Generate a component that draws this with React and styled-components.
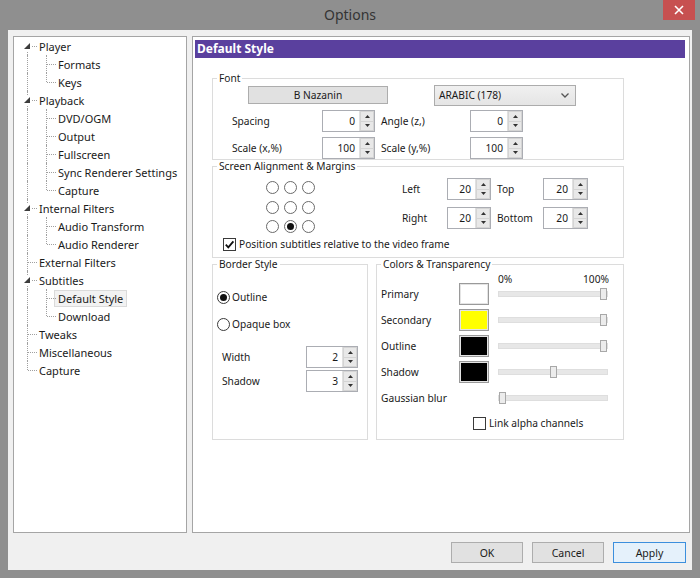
import React from 'react';
import styled, { createGlobalStyle } from 'styled-components';

const FONT = `"Segoe UI", "Noto Sans", "Open Sans", sans-serif`;

const Global = createGlobalStyle`
  html, body { margin: 0; padding: 0; background: #8f8f8f; }
  body { font-family: ${FONT}; font-size: 11px; color: #1a1a1a; }
  * { box-sizing: border-box; }
`;

const Window = styled.div`
  width: 700px;
  height: 578px;
  background: #8f8f8f;
  display: flex;
  flex-direction: column;
  padding-bottom: 8px;
`;

const TitleBar = styled.div`
  height: 30px;
  flex: none;
  display: grid;
  grid-template-columns: 1fr auto 1fr;
  align-items: start;
`;

const Title = styled.div`
  grid-column: 2;
  padding-top: 5px;
  line-height: 20px;
  font-size: 14px;
  color: #343434;
`;

const CloseBtn = styled.div`
  grid-column: 3;
  justify-self: end;
  margin-right: 5px;
  width: 32px;
  height: 20px;
  background: #c75050;
  display: flex;
  align-items: center;
  justify-content: center;
`;

const Client = styled.div`
  flex: 1;
  margin: 0 8px;
  background: #f0f0f0;
  padding: 6px 2px 0 5px;
  display: flex;
  flex-direction: column;
`;

const Panes = styled.div`
  height: 497px;
  display: flex;
  gap: 5px;
`;

const TreePane = styled.div`
  width: 174px;
  flex: none;
  background: #fff;
  border: 1px solid #a5a5a5;
  padding: 0 0 0 4px;
  display: flex;
  flex-direction: column;
`;

const TreeRow = styled.div`
  height: 18px;
  display: flex;
  align-items: center;
`;

const Guide = styled.span`
  position: relative;
  width: 19px;
  height: 18px;
  flex: none;
  display: flex;
  align-items: center;
  justify-content: center;
  &::before {
    content: '';
    display: ${(p) => (p.$v === 'none' ? 'none' : 'block')};
    position: absolute;
    left: 9px;
    top: ${(p) => (p.$v === 'bottom' ? '9px' : '0')};
    bottom: ${(p) => (p.$v === 'top' ? '9px' : '0')};
    border-left: 1px dotted #a0a0a0;
  }
  &::after {
    content: '';
    display: ${(p) => (p.$h ? 'block' : 'none')};
    position: absolute;
    left: 10px;
    right: 0;
    top: 9px;
    border-top: 1px dotted #a0a0a0;
  }
`;

const Expander = styled.span`
  position: relative;
  z-index: 1;
  width: 9px;
  height: 9px;
  margin-left: -1px;
  background: #fff;
  display: flex;
  align-items: center;
  justify-content: center;
`;

const TreeLabel = styled.span`
  margin-left: -2px;
  padding: 0 3px;
  height: 17px;
  line-height: 15px;
  white-space: nowrap;
  border: 1px solid ${(p) => (p.$sel ? '#dadada' : 'transparent')};
  background: ${(p) => (p.$sel ? '#f2f2f2' : 'transparent')};
`;

const RightPane = styled.div`
  flex: 1;
  background: #fff;
  border: 1px solid #a5a5a5;
  display: flex;
  flex-direction: column;
  font-size: 10.2px;
`;

const PageHeader = styled.div`
  margin: 3px 4px 0 2px;
  height: 18px;
  background: #5a409e;
  color: #fff;
  font-weight: bold;
  font-size: 12px;
  line-height: 18px;
  padding-left: 2px;
`;

const PageBody = styled.div`
  padding: 14px 0 0 19px;
  display: flex;
  flex-direction: column;
`;

const Group = styled.fieldset`
  margin: 0;
  padding: 0 0 ${(p) => p.$pb || 0}px 0;
  min-width: 0;
  width: ${(p) => p.$w}px;
  height: ${(p) => (p.$h ? `${p.$h}px` : 'auto')};
  border: 1px solid #dcdcdc;
  display: flex;
  flex-direction: column;
`;

const Legend = styled.legend`
  margin-left: 4px;
  padding: 0 2px;
  line-height: 12px;
`;

const FontRow = styled.div`
  height: 22px;
  margin-left: 35px;
  display: flex;
  align-items: center;
`;

const PushButton = styled.div`
  width: ${(p) => p.$w}px;
  height: ${(p) => p.$h || 21}px;
  background: ${(p) => (p.$default ? '#e5f1fb' : '#e1e1e1')};
  border: 1px solid ${(p) => (p.$default ? '#3c8fdd' : '#adadad')};
  display: flex;
  align-items: center;
  justify-content: center;
  flex: none;
`;

const DialogButton = styled(PushButton)`
  font-size: 10.5px;
`;

const Combo = styled.div`
  margin-left: 46px;
  width: 142px;
  height: 21px;
  border: 1px solid #acacac;
  background: linear-gradient(#f0f0f0, #e5e5e5);
  display: flex;
  align-items: center;
  justify-content: space-between;
  padding: 0 6px 0 4px;
`;

const ParamGrid = styled.div`
  margin: 4px 0 0 19px;
  display: grid;
  grid-template-columns: 90px 53px 95px 53px;
  grid-auto-rows: 22px;
  row-gap: 5px;
  align-items: center;
`;

const FieldLabel = styled.span`
  padding-left: ${(p) => p.$pl || 0}px;
  width: ${(p) => (p.$w ? `${p.$w}px` : 'auto')};
  white-space: nowrap;
`;

const SpinBox = styled.div`
  width: ${(p) => p.$w}px;
  height: 22px;
  border: 1px solid #abadb3;
  background: #fff;
  display: flex;
`;

const SpinValue = styled.span`
  flex: 1;
  text-align: right;
  padding-right: 4px;
  line-height: 20px;
`;

const SpinArrows = styled.span`
  width: 15px;
  flex: none;
  display: flex;
  flex-direction: column;
  border-left: 1px solid #e0e0e0;
  background: #f4f4f4;
`;

const SpinHalf = styled.span`
  flex: 1;
  display: flex;
  align-items: center;
  justify-content: center;
  background: #e8e8e8;
  border: 1px solid #d4d4d4;
  & + & { border-top: none; }
`;

const AlignRow = styled.div`
  margin-top: 6px;
  display: flex;
  align-items: flex-start;
`;

const RadioGrid = styled.div`
  margin-left: 50px;
  display: grid;
  grid-template-columns: repeat(3, 18px);
  grid-template-rows: 19px 20px 19px;
  place-items: center;
`;

const MarginGrid = styled.div`
  margin-left: 85px;
  display: grid;
  grid-template-columns: 45px 44px 52px 45px;
  grid-auto-rows: 22px;
  row-gap: 7px;
  align-items: center;
`;

const RadioCircle = styled.span`
  width: 13px;
  height: 13px;
  border-radius: 50%;
  border: 1px solid ${(p) => (p.$light ? '#6a6a6a' : '#3a3a3a')};
  background: #fff;
  display: flex;
  align-items: center;
  justify-content: center;
  flex: none;
  &::after {
    content: '';
    display: ${(p) => (p.$on ? 'block' : 'none')};
    width: 7px;
    height: 7px;
    border-radius: 50%;
    background: #111;
  }
`;

const CheckBox = styled.span`
  width: 13px;
  height: 13px;
  border: 1px solid #3a3a3a;
  background: #fff;
  flex: none;
  display: flex;
  align-items: center;
  justify-content: center;
`;

const OptionRow = styled.div`
  height: 16px;
  margin: ${(p) => p.$m || '0'};
  display: flex;
  align-items: center;
  gap: ${(p) => p.$gap || 2}px;
  white-space: nowrap;
`;

const LowerRow = styled.div`
  display: flex;
  gap: 8px;
`;

const SpinRow = styled.div`
  height: 22px;
  margin: ${(p) => p.$m || '0'};
  display: flex;
  align-items: center;
`;

const ScaleHead = styled.div`
  margin: 3px 0 -2px 121px;
  width: 111px;
  height: 12px;
  line-height: 12px;
  display: flex;
  justify-content: space-between;
`;

const ColorGrid = styled.div`
  display: grid;
  grid-template-columns: 82px 30px 9px 110px;
  grid-auto-rows: 22px;
  row-gap: 4px;
  align-items: center;
`;

const Swatch = styled.span`
  width: 30px;
  height: 22px;
  border: 1px solid #9a9a9a;
  box-shadow: inset 0 0 0 1px #e4e4e4;
  background: ${(p) => p.$c};
`;

const Track = styled.span`
  grid-column: 4;
  position: relative;
  height: 22px;
  display: flex;
  align-items: center;
  &::before {
    content: '';
    flex: 1;
    height: 4px;
    background: #e7e7e7;
    border: 1px solid #dedede;
  }
`;

const Thumb = styled.span`
  position: absolute;
  top: 5px;
  width: 7px;
  height: 12px;
  background: #ececec;
  border: 1px solid #a8a8a8;
`;

const ButtonRow = styled.div`
  margin-top: 9px;
  padding-right: 4px;
  display: flex;
  justify-content: flex-end;
  gap: 9px;
`;

const TREE = [
  { label: 'Player', level: 0, exp: true, v: 'bottom' },
  { label: 'Formats', level: 1 },
  { label: 'Keys', level: 1, last: true },
  { label: 'Playback', level: 0, exp: true },
  { label: 'DVD/OGM', level: 1 },
  { label: 'Output', level: 1 },
  { label: 'Fullscreen', level: 1 },
  { label: 'Sync Renderer Settings', level: 1 },
  { label: 'Capture', level: 1, last: true },
  { label: 'Internal Filters', level: 0, exp: true },
  { label: 'Audio Transform', level: 1 },
  { label: 'Audio Renderer', level: 1, last: true },
  { label: 'External Filters', level: 0 },
  { label: 'Subtitles', level: 0, exp: true },
  { label: 'Default Style', level: 1, sel: true },
  { label: 'Download', level: 1, last: true },
  { label: 'Tweaks', level: 0 },
  { label: 'Miscellaneous', level: 0 },
  { label: 'Capture', level: 0, v: 'top' },
];

const Tri = () => (
  <svg width="6" height="6" viewBox="0 0 6 6">
    <polygon points="6,0 6,6 0,6" fill="#3c3c3c" />
  </svg>
);

function TreeItem({ item }) {
  if (item.level === 0) {
    return (
      <TreeRow>
        <Guide $v={item.v || 'full'} $h>
          {item.exp && (
            <Expander>
              <Tri />
            </Expander>
          )}
        </Guide>
        <TreeLabel>{item.label}</TreeLabel>
      </TreeRow>
    );
  }
  return (
    <TreeRow>
      <Guide $v="full" />
      <Guide $v={item.last ? 'top' : 'full'} $h />
      <TreeLabel $sel={item.sel}>{item.label}</TreeLabel>
    </TreeRow>
  );
}

const ArrowIcon = ({ up }) => (
  <svg width="5" height="3" viewBox="0 0 5 3">
    <polygon points={up ? '2.5,0 5,3 0,3' : '0,0 5,0 2.5,3'} fill="#333" />
  </svg>
);

function Spin({ value, w }) {
  return (
    <SpinBox $w={w}>
      <SpinValue>{value}</SpinValue>
      <SpinArrows>
        <SpinHalf>
          <ArrowIcon up />
        </SpinHalf>
        <SpinHalf>
          <ArrowIcon />
        </SpinHalf>
      </SpinArrows>
    </SpinBox>
  );
}

const CheckMark = () => (
  <svg width="11" height="11" viewBox="0 0 11 11">
    <path d="M1.8 5.6 L4.3 8.3 L9.4 2.4" fill="none" stroke="#111" strokeWidth="1.8" />
  </svg>
);

function Slider({ value }) {
  return (
    <Track>
      <Thumb style={{ left: `${1 + value * 101}px` }} />
    </Track>
  );
}

const COLORS = [
  { label: 'Primary', c: '#ffffff', v: 1 },
  { label: 'Secondary', c: '#ffff00', v: 1 },
  { label: 'Outline', c: '#000000', v: 1 },
  { label: 'Shadow', c: '#000000', v: 0.5 },
];

export default function App() {
  return (
    <Window>
      <Global />
      <TitleBar>
        <Title>Options</Title>
        <CloseBtn>
          <svg width="10" height="10" viewBox="0 0 10 10">
            <path d="M1 1 L9 9 M9 1 L1 9" stroke="#fff" strokeWidth="1.6" />
          </svg>
        </CloseBtn>
      </TitleBar>
      <Client>
        <Panes>
          <TreePane>
            {TREE.map((it, i) => (
              <TreeItem key={i} item={it} />
            ))}
          </TreePane>
          <RightPane>
            <PageHeader>Default Style</PageHeader>
            <PageBody>
              <Group $w={412}>
                <Legend>Font</Legend>
                <FontRow>
                  <PushButton $w={140} $h={18}>B Nazanin</PushButton>
                  <Combo>
                    <span>ARABIC (178)</span>
                    <svg width="8" height="5" viewBox="0 0 8 5">
                      <path d="M0.5 0.5 L4 4 L7.5 0.5" fill="none" stroke="#555" strokeWidth="1.3" />
                    </svg>
                  </Combo>
                </FontRow>
                <ParamGrid>
                  <FieldLabel>Spacing</FieldLabel>
                  <Spin value="0" w={53} />
                  <FieldLabel $pl={6}>Angle (z,)</FieldLabel>
                  <Spin value="0" w={53} />
                  <FieldLabel>Scale (x,%)</FieldLabel>
                  <Spin value="100" w={53} />
                  <FieldLabel $pl={6}>Scale (y,%)</FieldLabel>
                  <Spin value="100" w={53} />
                </ParamGrid>
              </Group>
              <Group $w={412} $pb={5}>
                <Legend>Screen Alignment &amp; Margins</Legend>
                <AlignRow>
                  <RadioGrid>
                    {Array.from({ length: 9 }).map((_, i) => (
                      <RadioCircle key={i} $light $on={i === 7} />
                    ))}
                  </RadioGrid>
                  <MarginGrid>
                    <FieldLabel>Left</FieldLabel>
                    <Spin value="20" w={44} />
                    <FieldLabel $pl={6}>Top</FieldLabel>
                    <Spin value="20" w={45} />
                    <FieldLabel>Right</FieldLabel>
                    <Spin value="20" w={44} />
                    <FieldLabel $pl={6}>Bottom</FieldLabel>
                    <Spin value="20" w={45} />
                  </MarginGrid>
                </AlignRow>
                <OptionRow $m="0 0 0 10px" $gap={3}>
                  <CheckBox>
                    <CheckMark />
                  </CheckBox>
                  Position subtitles relative to the video frame
                </OptionRow>
              </Group>
              <LowerRow>
                <Group $w={156} $h={182}>
                  <Legend>Border Style</Legend>
                  <OptionRow $m="19px 0 0 4px">
                    <RadioCircle $on />
                    Outline
                  </OptionRow>
                  <OptionRow $m="11px 0 0 4px">
                    <RadioCircle />
                    Opaque box
                  </OptionRow>
                  <SpinRow $m="14px 0 0 9px">
                    <FieldLabel $w={84}>Width</FieldLabel>
                    <Spin value="2" w={52} />
                  </SpinRow>
                  <SpinRow $m="2px 0 0 9px">
                    <FieldLabel $w={84}>Shadow</FieldLabel>
                    <Spin value="3" w={52} />
                  </SpinRow>
                </Group>
                <Group $w={248} $h={182}>
                  <Legend>Colors &amp; Transparency</Legend>
                  <ScaleHead>
                    <span>0%</span>
                    <span>100%</span>
                  </ScaleHead>
                  <ColorGrid>
                    {COLORS.map((c) => (
                      <React.Fragment key={c.label}>
                        <FieldLabel $pl={4}>{c.label}</FieldLabel>
                        <Swatch $c={c.c} />
                        <Slider value={c.v} />
                      </React.Fragment>
                    ))}
                    <FieldLabel $pl={4}>Gaussian blur</FieldLabel>
                    <Slider value={0} />
                  </ColorGrid>
                  <OptionRow $m="6px 0 0 96px" $gap={3}>
                    <CheckBox />
                    Link alpha channels
                  </OptionRow>
                </Group>
              </LowerRow>
            </PageBody>
          </RightPane>
        </Panes>
        <ButtonRow>
          <DialogButton $w={72}>OK</DialogButton>
          <DialogButton $w={72}>Cancel</DialogButton>
          <DialogButton $w={73} $default>Apply</DialogButton>
        </ButtonRow>
      </Client>
    </Window>
  );
}
